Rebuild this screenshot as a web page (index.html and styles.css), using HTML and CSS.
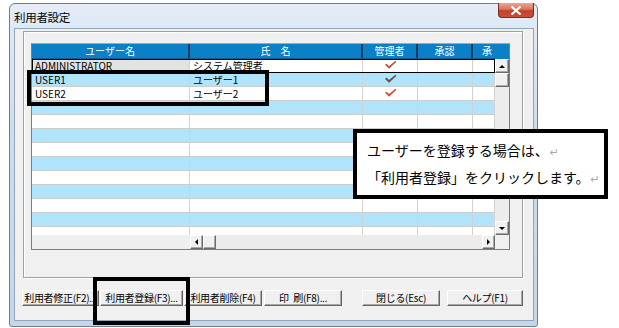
FILE: index.html
```html
<!DOCTYPE html>
<html>
<head>
    <meta charset="utf-8">
    <title>利用者設定</title>
    <link rel="stylesheet" href="styles.css">
</head>
<body>
    <div class="window">
        <div class="titlebar">
            <span class="title">利用者設定</span>
            <div class="close-btn">
                <svg width="12" height="9" viewBox="0 0 12 9"><path d="M1.5 0.5 L10.5 8.5 M10.5 0.5 L1.5 8.5" stroke="#fff" stroke-width="2.2"/></svg>
            </div>
        </div>
        <div class="client">
            <div class="panel">
                <div class="grid-frame">
                    <div class="viewport">
                        <div class="row head">
                            <div class="cell c1">ユーザー名</div>
                            <div class="cell c2">氏　名</div>
                            <div class="cell c3">管理者</div>
                            <div class="cell c4">承認</div>
                            <div class="cell c5">承</div>
                        </div>
                        <div class="row focus">
                            <div class="cell c1 current">ADMINISTRATOR</div>
                            <div class="cell c2">システム管理者</div>
                            <div class="cell c3"><svg class="check" viewBox="0 0 14 10"><path d="M1 4.6 L2.9 3.6 L5.4 6 L12.4 0.4 L13.4 1.4 L5.5 9 Z" fill="#c5523f"/></svg></div>
                            <div class="cell c4"></div>
                            <div class="cell c5"></div>
                        </div>
                        <div class="row blue">
                            <div class="cell c1">USER1</div>
                            <div class="cell c2">ユーザー1</div>
                            <div class="cell c3"><svg class="check" viewBox="0 0 14 10"><path d="M1 4.6 L2.9 3.6 L5.4 6 L12.4 0.4 L13.4 1.4 L5.5 9 Z" fill="#6a4a45"/></svg></div>
                            <div class="cell c4"></div>
                            <div class="cell c5"></div>
                        </div>
                        <div class="row">
                            <div class="cell c1">USER2</div>
                            <div class="cell c2">ユーザー2</div>
                            <div class="cell c3"><svg class="check" viewBox="0 0 14 10"><path d="M1 4.6 L2.9 3.6 L5.4 6 L12.4 0.4 L13.4 1.4 L5.5 9 Z" fill="#c5523f"/></svg></div>
                            <div class="cell c4"></div>
                            <div class="cell c5"></div>
                        </div>
                        <div class="row blue"><div class="cell c1"></div><div class="cell c2"></div><div class="cell c3"></div><div class="cell c4"></div><div class="cell c5"></div></div>
                        <div class="row"><div class="cell c1"></div><div class="cell c2"></div><div class="cell c3"></div><div class="cell c4"></div><div class="cell c5"></div></div>
                        <div class="row blue"><div class="cell c1"></div><div class="cell c2"></div><div class="cell c3"></div><div class="cell c4"></div><div class="cell c5"></div></div>
                        <div class="row"><div class="cell c1"></div><div class="cell c2"></div><div class="cell c3"></div><div class="cell c4"></div><div class="cell c5"></div></div>
                        <div class="row blue"><div class="cell c1"></div><div class="cell c2"></div><div class="cell c3"></div><div class="cell c4"></div><div class="cell c5"></div></div>
                        <div class="row"><div class="cell c1"></div><div class="cell c2"></div><div class="cell c3"></div><div class="cell c4"></div><div class="cell c5"></div></div>
                        <div class="row blue"><div class="cell c1"></div><div class="cell c2"></div><div class="cell c3"></div><div class="cell c4"></div><div class="cell c5"></div></div>
                        <div class="row"><div class="cell c1"></div><div class="cell c2"></div><div class="cell c3"></div><div class="cell c4"></div><div class="cell c5"></div></div>
                        <div class="row blue"><div class="cell c1"></div><div class="cell c2"></div><div class="cell c3"></div><div class="cell c4"></div><div class="cell c5"></div></div>
                        <div class="row"><div class="cell c1"></div><div class="cell c2"></div><div class="cell c3"></div><div class="cell c4"></div><div class="cell c5"></div></div>
                    </div>
                    <div class="vbar">
                        <div class="vbar-head"></div>
                        <div class="sb-btn"><span class="tri up"></span></div>
                        <div class="sb-btn"></div>
                        <div class="sb-track"></div>
                        <div class="sb-btn"><span class="tri down"></span></div>
                    </div>
                    <div class="hzone">
                        <div class="hblank"></div>
                        <div class="hbar">
                            <div class="sb-btn"><span class="tri left"></span></div>
                            <div class="sb-btn"></div>
                            <div class="sb-track"></div>
                            <div class="sb-btn"><span class="tri right"></span></div>
                        </div>
                    </div>
                    <div class="corner"></div>
                </div>
            </div>
            <div class="buttons">
                <div class="btn b-fix">利用者修正(F2)...</div>
                <div class="btn b-reg">利用者登録(F3)...</div>
                <div class="btn b-del">利用者削除(F4)</div>
                <div class="btn b-print">印&ensp;刷(F8)...</div>
                <div class="btn b-close">閉じる(Esc)</div>
                <div class="btn b-help">ヘルプ(F1)</div>
            </div>
        </div>
    </div>

    <div class="mark mark-rows"></div>
    <div class="mark mark-button"></div>
    <div class="callout">
        <div class="callout-line">ユーザーを登録する場合は、<span class="ret">↵</span></div>
        <div class="callout-line">「利用者登録」をクリックします。<span class="ret">↵</span></div>
    </div>
</body>
</html>
```

FILE: styles.css
```css
body {
    margin: 0;
    padding: 3px 0 0 9px;
    width: 619px;
    height: 328px;
    box-sizing: border-box;
    overflow: hidden;
    position: relative;
    background: #ffffff;
    font-family: "Noto Sans CJK JP", "DejaVu Sans", sans-serif;
    color: #000;
}
.window {
    width: 529px;
    height: 324px;
    box-sizing: border-box;
    border: 1px solid #6d7e92;
    border-radius: 6px 6px 3px 3px;
    background: linear-gradient(to bottom, #e3ecf7 0%, #cddcee 40%, #c6d6ea 100%);
    padding: 0 3px 5px 4px;
    display: flex;
    flex-direction: column;
}
.titlebar {
    height: 24px;
    display: flex;
    justify-content: space-between;
    align-items: flex-start;
}
.title {
    font-size: 11.5px;
    line-height: 14px;
    margin-top: 6px;
    letter-spacing: -0.3px;
}
.close-btn {
    width: 36px;
    height: 15px;
    margin-top: -1px;
    box-sizing: border-box;
    border: 1px solid #7a2a1e;
    border-top: none;
    border-radius: 0 0 4px 4px;
    background: linear-gradient(to bottom, #e9a794 0%, #d9735c 45%, #c2412a 55%, #c8523a 100%);
    display: flex;
    justify-content: center;
    align-items: center;
}
.client {
    flex: 1;
    border: 1px solid #93a5ba;
    background: #f0f0f0;
    padding: 2px 0 0 7px;
}
.panel {
    width: 500px;
    height: 247px;
    box-sizing: border-box;
    margin-left: 1px;
    border: 1px solid #a0a0a0;
    box-shadow: inset 1px 1px 0 #fff, 1px 1px 0 #fff;
    padding: 11px 0 0 7px;
}
.grid-frame {
    width: 479px;
    box-sizing: border-box;
    border: 1px solid #7d7d7d;
    border-top-color: #a7a7a7;
    display: grid;
    grid-template-columns: 463px 14px;
    grid-template-rows: 191px 14px;
    background: #f0f0f0;
}
.viewport {
    overflow: hidden;
    background: #fff;
}
.row {
    display: flex;
    width: 463px;
    height: 14px;
    box-sizing: border-box;
    border-bottom: 1px solid #cdcdcd;
    overflow: hidden;
    font-size: 10px;
    line-height: 13px;
    background: #fff;
}
.row.blue {
    background: #b0e4fc;
}
.row.focus {
    outline: 1px solid #000;
    outline-offset: -1px;
}
.cell {
    flex-shrink: 0;
    box-sizing: border-box;
    border-right: 1px solid #d2d2d2;
    padding-left: 3px;
    white-space: nowrap;
    overflow: hidden;
}
.c1 { width: 158px; }
.c2 { width: 173px; }
.c3 { width: 55px; text-align: center; padding-left: 0; }
.c4 { width: 55px; }
.c5 { width: 22px; }
.cell.current {
    background: #e3e3e3;
}
.row.head {
    height: 15px;
    background: #0b80c6;
    border-bottom: 1px solid #0b5f94;
    color: #fff;
    line-height: 14px;
}
.row.head .cell {
    text-align: center;
    padding-left: 0;
    border-right: 2px solid #123c5e;
}
.row.head .c5 {
    text-align: left;
    padding-left: 9px;
    border-right: none;
}
.check {
    width: 13px;
    height: 10px;
    margin-top: 1px;
}
.vbar {
    display: flex;
    flex-direction: column;
    background: #eaeaea;
}
.vbar-head {
    height: 15px;
    background: #0b80c6;
    flex-shrink: 0;
}
.sb-btn {
    width: 14px;
    height: 14px;
    flex-shrink: 0;
    box-sizing: border-box;
    background: #f0f0f0;
    border: 1px solid;
    border-color: #fff #6b6b6b #6b6b6b #fff;
    box-shadow: inset -1px -1px 0 #a8a8a8;
    display: flex;
    justify-content: center;
    align-items: center;
}
.sb-track {
    flex: 1;
    background: #ececec;
}
.tri {
    width: 0;
    height: 0;
    border: 3px solid transparent;
}
.tri.up { border-bottom-color: #000; border-top-width: 0; }
.tri.down { border-top-color: #000; border-bottom-width: 0; }
.tri.left { border-right-color: #000; border-left-width: 0; }
.tri.right { border-left-color: #000; border-right-width: 0; }
.hzone {
    display: flex;
}
.hblank {
    width: 158px;
    background: #efefef;
}
.hbar {
    flex: 1;
    display: flex;
    background: #ececec;
}
.hbar .sb-btn {
    width: 13px;
}
.corner {
    background: #f0f0f0;
}
.buttons {
    display: flex;
    margin-top: 12px;
}
.btn {
    height: 16px;
    box-sizing: border-box;
    background: #f0f0f0;
    border: 1px solid;
    border-color: #fff #646464 #646464 #fff;
    box-shadow: inset -1px -1px 0 #a8a8a8;
    font-size: 10px;
    line-height: 14px;
    text-align: center;
    white-space: nowrap;
    overflow: hidden;
    letter-spacing: -0.3px;
}
.b-fix { width: 77px; }
.b-reg { width: 83px; margin-left: 1px; }
.b-del { width: 78px; margin-left: 1px; }
.b-print { width: 78px; margin-left: 2px; }
.b-close { width: 78px; margin-left: 20px; }
.b-help { width: 76px; margin-left: 7px; }
/* annotation overlays */
.mark {
    position: absolute;
    box-sizing: border-box;
    border: 4px solid #000;
}
.mark-rows {
    left: 27px;
    top: 70px;
    width: 242px;
    height: 36px;
}
.mark-button {
    left: 93px;
    top: 277px;
    width: 97px;
    height: 48px;
}
.callout {
    position: absolute;
    left: 353px;
    top: 129px;
    width: 255px;
    height: 70px;
    box-sizing: border-box;
    border: 4px solid #000;
    background: #fff;
    padding: 4px 0 0 10px;
}
.callout-line {
    font-size: 14px;
    line-height: 26px;
    white-space: nowrap;
}
.ret {
    color: #a9a9a9;
    font-size: 11px;
    margin-left: 1px;
}
```
